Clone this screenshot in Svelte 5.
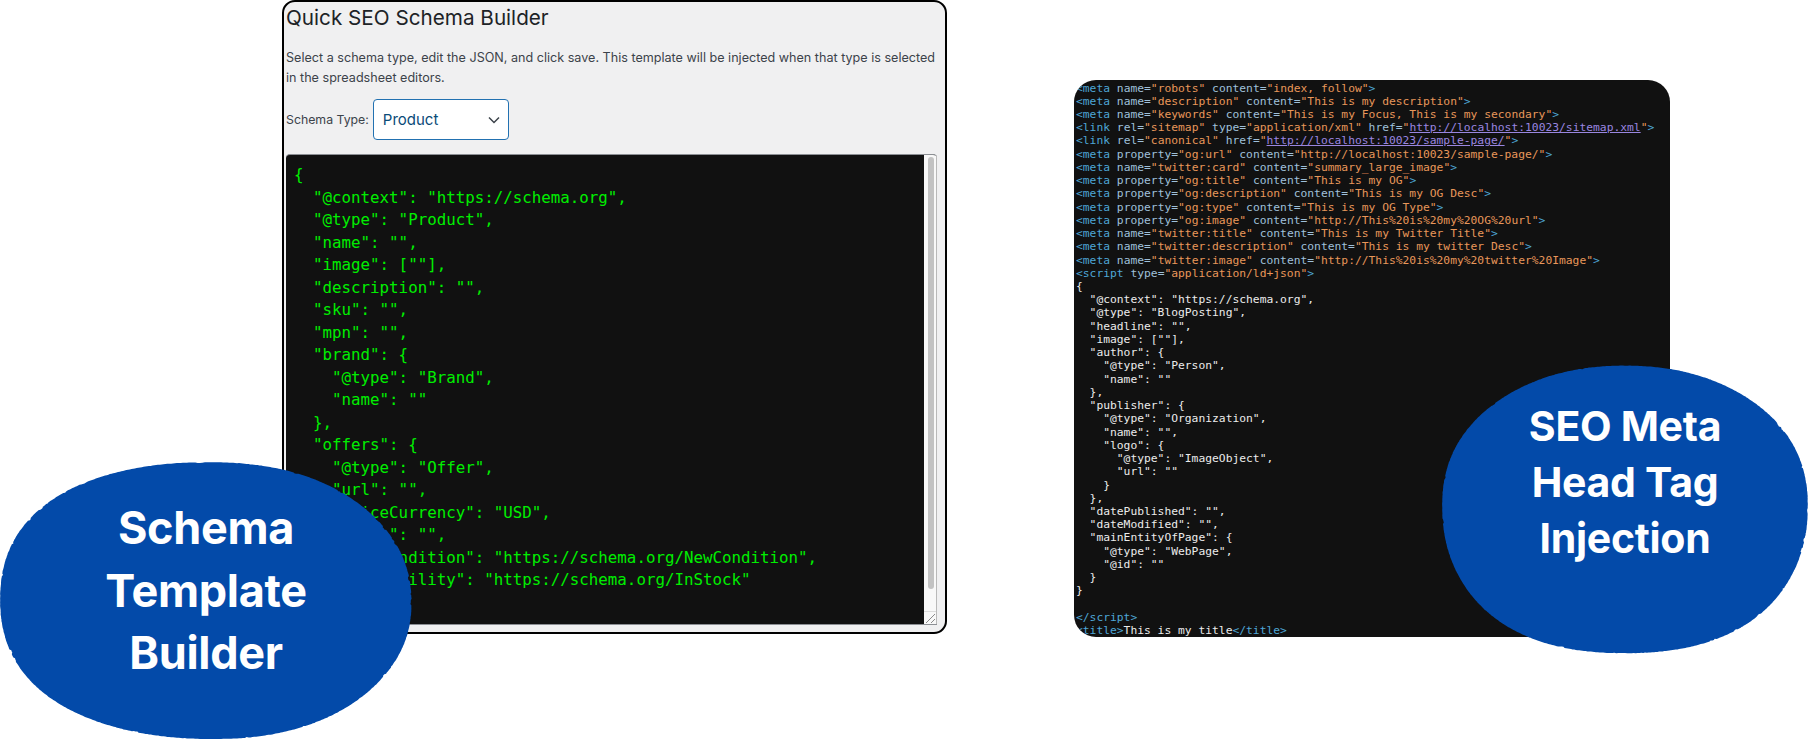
<script>
  function blob(cx, cy, rx, ry, p, seed) {
    let s = seed;
    const rnd = () => { s = (s * 16807) % 2147483647; return s / 2147483647; };
    const n = 720; const pts = [];
    let nick = 0;
    for (let i = 0; i < n; i++) {
      const t = (i / n) * Math.PI * 2;
      const co = Math.cos(t), si = Math.sin(t);
      const w = 1 + 0.006 * Math.sin(2 * t + seed) + 0.004 * Math.sin(5 * t + seed * 2);
      if (nick > 0) nick--;
      else if (rnd() < 0.03) nick = 1 + Math.floor(rnd() * 3);
      const j = 1 - (nick > 0 ? 0.003 + rnd() * 0.004 : rnd() * 0.0015);
      const x = rx * w * j * Math.sign(co) * Math.pow(Math.abs(co), 2 / p);
      const y = ry * w * j * Math.sign(si) * Math.pow(Math.abs(si), 2 / p);
      pts.push((cx + x).toFixed(1) + ',' + (cy + y).toFixed(1));
    }
    return 'M' + pts.join('L') + 'Z';
  }
  const leftBlob = blob(205, 600.5, 205, 139, 2.2, 7);
  const rightBlob = blob(1625, 510, 184, 143, 2.2, 11);

  const schema = `{
  "@context": "https://schema.org",
  "@type": "Product",
  "name": "",
  "image": [""],
  "description": "",
  "sku": "",
  "mpn": "",
  "brand": {
    "@type": "Brand",
    "name": ""
  },
  "offers": {
    "@type": "Offer",
    "url": "",
    "priceCurrency": "USD",
    "price": "",
    "itemCondition": "https://schema.org/NewCondition",
    "availability": "https://schema.org/InStock"`;

  const tags = [
    ['meta', [['name', 'robots'], ['content', 'index, follow']]],
    ['meta', [['name', 'description'], ['content', 'This is my description']]],
    ['meta', [['name', 'keywords'], ['content', 'This is my Focus, This is my secondary']]],
    ['link', [['rel', 'sitemap'], ['type', 'application/xml'], ['href', 'http://localhost:10023/sitemap.xml', true]]],
    ['link', [['rel', 'canonical'], ['href', 'http://localhost:10023/sample-page/', true]]],
    ['meta', [['property', 'og:url'], ['content', 'http://localhost:10023/sample-page/']]],
    ['meta', [['name', 'twitter:card'], ['content', 'summary_large_image']]],
    ['meta', [['property', 'og:title'], ['content', 'This is my OG']]],
    ['meta', [['property', 'og:description'], ['content', 'This is my OG Desc']]],
    ['meta', [['property', 'og:type'], ['content', 'This is my OG Type']]],
    ['meta', [['property', 'og:image'], ['content', 'http://This%20is%20my%20OG%20url']]],
    ['meta', [['name', 'twitter:title'], ['content', 'This is my Twitter Title']]],
    ['meta', [['name', 'twitter:description'], ['content', 'This is my twitter Desc']]],
    ['meta', [['name', 'twitter:image'], ['content', 'http://This%20is%20my%20twitter%20Image']]],
    ['script', [['type', 'application/ld+json']]]
  ];

  const ld = `{
  "@context": "https://schema.org",
  "@type": "BlogPosting",
  "headline": "",
  "image": [""],
  "author": {
    "@type": "Person",
    "name": ""
  },
  "publisher": {
    "@type": "Organization",
    "name": "",
    "logo": {
      "@type": "ImageObject",
      "url": ""
    }
  },
  "datePublished": "",
  "dateModified": "",
  "mainEntityOfPage": {
    "@type": "WebPage",
    "@id": ""
  }
}
`;
</script>

<div class="stage">
  <section class="card">
    <h1>Quick SEO Schema Builder</h1>
    <p class="desc">Select a schema type, edit the JSON, and click save. This template will be injected when that type is selected<br/>in the spreadsheet editors.</p>
    <div class="field">
      <span class="label">Schema Type:</span>
      <div class="select">
        <span>Product</span>
        <svg width="12" height="8" viewBox="0 0 12 8"><path d="M1 1.5l5 5 5-5" fill="none" stroke="#3c434a" stroke-width="1.5"/></svg>
      </div>
    </div>
    <div class="editor">
      <pre class="json">{schema}</pre>
      <div class="track">
        <div class="thumb"></div>
        <div class="resizer">
          <svg width="12" height="12" viewBox="0 0 12 12"><path d="M2 11L11 2M7 11l4-4" stroke="#8a8a8a" stroke-width="1" fill="none"/></svg>
        </div>
      </div>
    </div>
  </section>

  <section class="source">
    <pre class="html">{#each tags as [name, attrs]}<span class="tag">&lt;{name}</span>{#each attrs as [k, v, link]}{' '}<span class="attr">{k}=</span><span class="val">"{#if link}<span class="link">{v}</span>{:else}{v}{/if}"</span>{/each}<span class="tag">&gt;</span>{'\n'}{/each}<span class="ld">{ld}</span>{'\n'}<span class="tag">&lt;/script&gt;</span>{'\n'}<span class="tag">&lt;title&gt;</span><span class="ld">This is my title</span><span class="tag">&lt;/title&gt;</span></pre>
  </section>

  <svg class="blobs" width="1811" height="743" viewBox="0 0 1811 743">
    <path d={leftBlob} fill="#034aa9"/>
    <path d={rightBlob} fill="#034aa9"/>
  </svg>

  <div class="badge left">Schema<br/>Template<br/>Builder</div>
  <div class="badge right">SEO Meta<br/>Head Tag<br/>Injection</div>
</div>

<style>
  :global(body) { margin: 0; background: #fff; }
  .stage {
    position: relative;
    width: 1811px;
    height: 743px;
    overflow: hidden;
    display: flex;
    align-items: flex-start;
    padding-left: 282px;
    gap: 127px;
    box-sizing: border-box;
  }
  .card {
    width: 665px;
    height: 634px;
    box-sizing: border-box;
    background: #f0f0f1;
    border: 2px solid #000;
    border-radius: 13px;
    padding: 0 8px 0 2px;
    display: flex;
    flex-direction: column;
    font-family: Inter, "Liberation Sans", sans-serif;
    color: #3c434a;
  }
  h1 {
    margin: 1px 0 0;
    font-size: 20.7px;
    line-height: 29px;
    font-weight: 400;
    color: #1d2327;
  }
  .desc {
    margin: 16px 0 0;
    font-size: 12.6px;
    line-height: 19.5px;
    white-space: nowrap;
  }
  .field {
    margin-top: 12px;
    display: flex;
    align-items: center;
    gap: 4px;
    font-size: 12.3px;
  }
  .select {
    width: 136px;
    height: 41px;
    box-sizing: border-box;
    border: 1.5px solid #2271b1;
    border-radius: 4px;
    background: #fff;
    color: #0a4b78;
    font-size: 15px;
    display: flex;
    align-items: center;
    justify-content: space-between;
    padding: 0 8px 0 9px;
  }
  .editor {
    position: relative;
    margin-top: 14px;
    height: 471px;
    box-sizing: border-box;
    background: #111;
    border-top: 1px solid #8c8f94;
    border-bottom: 1px solid #8c8f94;
    border-radius: 4px 4px 0 0;
    overflow: hidden;
  }
  .json {
    margin: 0;
    padding: 9px 8px;
    font-family: "DejaVu Sans Mono", monospace;
    font-size: 15.8px;
    line-height: 22.5px;
    color: #00ee00;
  }
  .track {
    position: absolute;
    top: 0;
    right: 0;
    bottom: 0;
    width: 13px;
    background: #f8f8f8;
    border-right: 1px solid #b9b9b9;
    box-sizing: border-box;
    display: flex;
    flex-direction: column;
    justify-content: space-between;
  }
  .thumb {
    margin: 2px 2px 0 4px;
    height: 432px;
    background: #c2c2c2;
    border-radius: 3px;
  }
  .resizer {
    height: 12px;
    border-top: 1px solid #dcdcdc;
    display: flex;
    justify-content: flex-end;
  }
  .source {
    width: 596px;
    height: 557px;
    margin-top: 80px;
    box-sizing: border-box;
    background: #111;
    border-radius: 22px;
    overflow: hidden;
    padding: 1.5px 0 0 2px;
  }
  .html {
    margin: 0;
    font-family: "DejaVu Sans Mono", monospace;
    font-size: 11.3px;
    line-height: 13.24px;
    color: #e6e6e6;
  }
  .tag { color: #4ea6d6; }
  .attr { color: #9fc0da; }
  .val { color: #e8975a; }
  .link { color: #9a86e0; text-decoration: underline; }
  .ld { color: #ececec; }
  .blobs {
    position: absolute;
    left: 0;
    top: 0;
    pointer-events: none;
  }
  .badge {
    position: absolute;
    font-family: Inter, "Liberation Sans", sans-serif;
    font-weight: 700;
    color: #fff;
    text-align: center;
    letter-spacing: -0.3px;
  }
  .left {
    left: 56px;
    width: 300px;
    top: 497px;
    font-size: 45px;
    line-height: 62.5px;
  }
  .right {
    left: 1475px;
    width: 300px;
    top: 398px;
    font-size: 41px;
    line-height: 56px;
  }
</style>
